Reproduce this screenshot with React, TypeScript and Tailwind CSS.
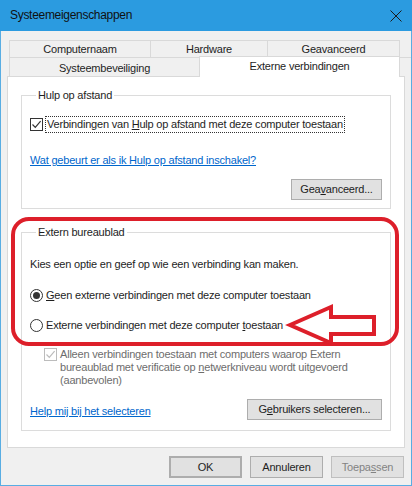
import React from 'react';

const font = { fontFamily: '"Liberation Sans", Arial, sans-serif' };

function Check({ disabled = false }: { disabled?: boolean }) {
    const c = disabled ? '#bcbcbc' : '#333333';
    return (
        <span className="w-[13px] h-[13px] shrink-0 flex items-center justify-center bg-white border" style={{ borderColor: c }}>
            <svg width="11" height="11" viewBox="0 0 11 11">
                <path d="M1.5 5.5 L4.3 8.3 L9.6 2.2" fill="none" stroke={c} strokeWidth="1.2" />
            </svg>
        </span>
    );
}

function Radio({ on = false }: { on?: boolean }) {
    return (
        <span className="w-[13px] h-[13px] shrink-0 rounded-full border border-[#333333] bg-white flex items-center justify-center">
            {on && <span className="w-[7px] h-[7px] rounded-full bg-[#333333]" />}
        </span>
    );
}

function Btn({ children, className = '' }: { children: React.ReactNode; className?: string }) {
    return (
        <div className={`h-[21px] flex items-center justify-center border bg-[#e1e1e1] border-[#adadad] ${className}`}>
            {children}
        </div>
    );
}

export default function App() {
    return (
        <div className="w-[412px] h-[486px] bg-[#f0f0f0] border-x border-b border-[#58ade3] flex flex-col relative text-[11px] tracking-[-0.2px] whitespace-nowrap text-[#1e1e1e] leading-[15px]" style={font}>
            {/* Title bar */}
            <div className="h-[31px] -mx-px bg-[#2b9be0] flex items-center justify-between pl-[10px] pr-[10px] shrink-0">
                <span className="text-[12px] text-[#111] tracking-[-0.3px]">Systeemeigenschappen</span>
                <svg width="12" height="12" viewBox="0 0 12 12">
                    <path d="M0.5 0.5 L11.5 11.5 M11.5 0.5 L0.5 11.5" stroke="#1c1c1c" strokeWidth="1" />
                </svg>
            </div>

            {/* Tabs */}
            <div className="mt-[9px] ml-[8px] flex flex-col">
                <div className="flex h-[17px]">
                    <div className="w-[141px] border-t border-l border-[#d9d9d9] flex items-center justify-center">Computernaam</div>
                    <div className="w-[117px] border-t border-l border-[#d9d9d9] flex items-center justify-center">Hardware</div>
                    <div className="w-[133px] border-t border-l border-r border-[#d9d9d9] flex items-center justify-center">Geavanceerd</div>
                </div>
                <div className="flex h-[19px] border-t border-[#d9d9d9]">
                    <div className="w-[190px] border-l border-[#d9d9d9] flex items-center justify-center pt-[2px]">Systeembeveiliging</div>
                    <div className="w-[201px] h-[21px] -mt-[2px] bg-white border-t border-l border-r border-[#d9d9d9] flex items-start justify-center pt-[2px] z-10">Externe verbindingen</div>
                </div>
            </div>

            {/* Panel */}
            <div className="mx-[6px] h-[372px] border border-[#d9d9d9] bg-white px-[13px] shrink-0">
                <fieldset className="mt-[11px] border border-[#dcdcdc] px-[8px] pb-[8px]">
                    <legend className="ml-[6px] px-[2px]">Hulp op afstand</legend>
                    <div className="mt-[13px] flex items-center gap-[2px]">
                        <Check />
                        <span className="border border-dotted border-[#333] px-px">
                            Verbindingen van <u>H</u>ulp op afstand met deze computer toestaan
                        </span>
                    </div>
                    <div className="mt-[20px] text-[#0066cc] underline">Wat gebeurt er als ik Hulp op afstand inschakel?</div>
                    <div className="mt-[11px] flex justify-end">
                        <Btn className="w-[91px]">Gea<u>v</u>anceerd...</Btn>
                    </div>
                </fieldset>

                <fieldset className="mt-[16px] border border-[#dcdcdc] px-[8px] pb-[10px]">
                    <legend className="ml-[6px] px-[2px]">Extern bureaublad</legend>
                    <div className="mt-[17px]">Kies een optie en geef op wie een verbinding kan maken.</div>
                    <div className="mt-[16px] flex items-center gap-[3px]">
                        <Radio on />
                        <span><u>G</u>een externe verbindingen met deze computer toestaan</span>
                    </div>
                    <div className="mt-[15px] flex items-center gap-[3px]">
                        <Radio />
                        <span>Externe verbindingen met deze computer <u>t</u>oestaan</span>
                    </div>
                    <div className="mt-[15px] pl-[14px] flex items-start gap-[3px] leading-[13px] text-[#6d6d6d]">
                        <Check disabled />
                        <span>
                            Alleen verbindingen toestaan met computers waarop Extern<br />
                            bureaublad met verificatie op <u>n</u>etwerkniveau wordt uitgevoerd<br />
                            (aanbevolen)
                        </span>
                    </div>
                    <div className="mt-[12px] flex items-center justify-between">
                        <span className="text-[#0066cc] underline mt-[4px]">Help mij bij het selecteren</span>
                        <Btn className="w-[135px]">G<u>e</u>bruikers selecteren...</Btn>
                    </div>
                </fieldset>
            </div>

            {/* Dialog buttons */}
            <div className="mt-[8px] pr-[7px] flex justify-end gap-[8px]">
                <Btn className="w-[73px] h-[22px] border-2 border-[#0078d7]">OK</Btn>
                <Btn className="w-[73px] h-[22px]">Annuleren</Btn>
                <Btn className="w-[73px] h-[22px] bg-[#cccccc] border-[#bfbfbf] text-[#838383]">Toepa<u>s</u>sen</Btn>
            </div>

            {/* Red annotation */}
            <div className="absolute left-[10px] top-[217px] w-[388px] h-[129px] border-[4px] border-[#dd1f2a] rounded-[18px] pointer-events-none" />
            <svg className="absolute left-0 top-0 pointer-events-none" width="412" height="486">
                <polygon points="289,325 330,307 330,317 373,317 373,334 330,334 330,343" fill="none" stroke="#dd1f2a" strokeWidth="4" strokeLinejoin="miter" />
            </svg>
        </div>
    );
}
